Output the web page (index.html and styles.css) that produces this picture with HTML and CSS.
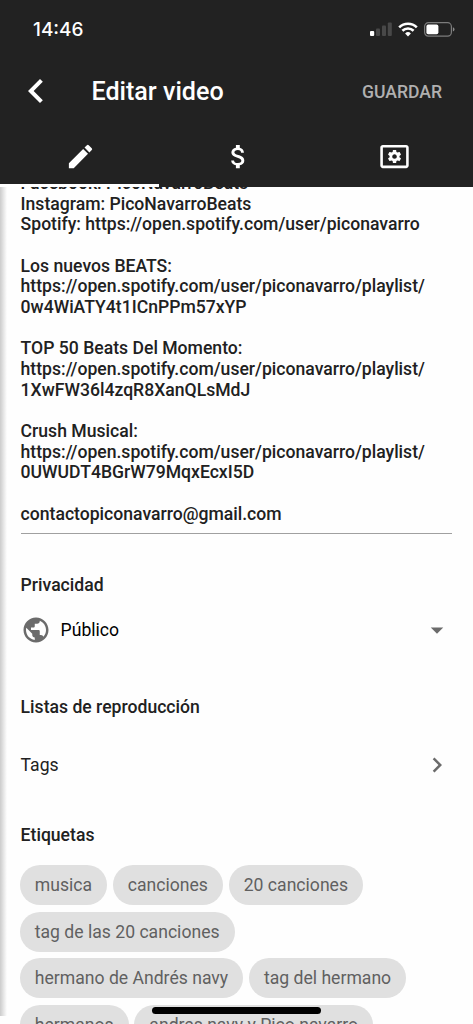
FILE: index.html
```html
<!DOCTYPE html>
<html lang="es">
<head>
    <meta charset="UTF-8">
    <meta name="viewport" content="width=device-width, initial-scale=1.0">
    <title>Editar video</title>
    <link rel="stylesheet" href="styles.css">
</head>
<body>
    <header>
        <div class="status">
            <span class="hora">14:46</span>
            <div class="status-icons">
                <svg class="signal" width="22" height="15" viewBox="0 0 22 15">
                    <rect x="0" y="9" width="4.2" height="5" rx="1" fill="#fff"/>
                    <rect x="6" y="6.5" width="4" height="7.5" rx="1" fill="#484848"/>
                    <rect x="12" y="3.5" width="4" height="10.5" rx="1" fill="#484848"/>
                    <rect x="17.8" y="0.5" width="4" height="13.5" rx="1" fill="#484848"/>
                </svg>
                <svg class="wifi" width="20" height="15" viewBox="0 0 20 15" fill="none" stroke="#fff" stroke-width="2.6">
                    <path d="M1.2 5.4a12.6 12.6 0 0 1 17.6 0"/>
                    <path d="M4.4 8.8a8 8 0 0 1 11.2 0"/>
                    <path d="M10 14.4l-2.9-2.9a4.2 4.2 0 0 1 5.8 0z" fill="#fff" stroke="none"/>
                </svg>
                <svg class="battery" width="31" height="15" viewBox="0 0 31 15">
                    <rect x="0.6" y="0.7" width="26.8" height="13.4" rx="3.8" fill="none" stroke="#7c7c7c" stroke-width="1.2"/>
                    <rect x="2.4" y="2.6" width="12" height="9.6" rx="1.8" fill="#fff"/>
                    <path d="M28.9 5.2q1.6.6 1.6 2.2t-1.6 2.2z" fill="#8a8a8a"/>
                </svg>
            </div>
        </div>
        <div class="barra">
            <svg class="volver" viewBox="0 0 24 24"><path d="M15.41 7.41L14 6l-6 6 6 6 1.41-1.41L10.83 12z"/></svg>
            <h1>Editar video</h1>
            <button class="guardar">GUARDAR</button>
        </div>
        <nav>
            <div class="tab activo">
                <svg viewBox="0 0 24 24"><path d="M3 17.25V21h3.75L17.81 9.94l-3.75-3.75L3 17.25zM20.71 7.04a1 1 0 0 0 0-1.41l-2.34-2.34a1 1 0 0 0-1.41 0l-1.83 1.83 3.75 3.75 1.83-1.83z"/></svg>
            </div>
            <div class="tab">
                <svg viewBox="0 0 24 24"><path d="M11.8 10.9c-2.27-.59-3-1.2-3-2.15 0-1.09 1.01-1.85 2.7-1.85 1.78 0 2.44.85 2.5 2.1h2.21c-.07-1.72-1.12-3.3-3.21-3.81V3h-3v2.16c-1.94.42-3.5 1.68-3.5 3.61 0 2.31 1.91 3.46 4.7 4.13 2.5.6 3 1.48 3 2.41 0 .69-.49 1.79-2.7 1.79-2.06 0-2.87-.92-2.98-2.1h-2.2c.12 2.19 1.76 3.42 3.68 3.83V21h3v-2.15c1.95-.37 3.5-1.5 3.5-3.55 0-2.84-2.43-3.81-4.7-4.4z"/></svg>
            </div>
            <div class="tab config">
                <svg viewBox="0 0 24 24">
                    <path d="M21 3H3c-1.1 0-2 .9-2 2v14c0 1.1.9 2 2 2h18c1.1 0 2-.9 2-2V5c0-1.1-.9-2-2-2zm0 16H3V5h18v14z"/>
                    <g transform="translate(5.9 5.9) scale(.51)">
                        <path d="M19.43 12.98c.04-.32.07-.64.07-.98s-.03-.66-.07-.98l2.11-1.65c.19-.15.24-.42.12-.64l-2-3.46c-.12-.22-.39-.3-.61-.22l-2.49 1c-.52-.4-1.08-.73-1.69-.98l-.38-2.65C14.46 2.18 14.25 2 14 2h-4c-.25 0-.46.18-.49.42l-.38 2.65c-.61.25-1.17.59-1.69.98l-2.49-1c-.23-.09-.49 0-.61.22l-2 3.46c-.13.22-.07.49.12.64l2.11 1.65c-.04.32-.07.65-.07.98s.03.66.07.98l-2.11 1.65c-.19.15-.24.42-.12.64l2 3.46c.12.22.39.3.61.22l2.49-1c.52.4 1.08.73 1.69.98l.38 2.65c.03.24.24.42.49.42h4c.25 0 .46-.18.49-.42l.38-2.65c.61-.25 1.17-.59 1.69-.98l2.49 1c.23.09.49 0 .61-.22l2-3.46c.12-.22.07-.49-.12-.64l-2.11-1.65zM12 15.5c-1.93 0-3.5-1.57-3.5-3.5s1.57-3.5 3.5-3.5 3.5 1.57 3.5 3.5-1.57 3.5-3.5 3.5z"/>
                    </g>
                </svg>
            </div>
        </nav>
    </header>

    <main>
        <div class="descripcion">Facebook: PicoNavarroBeats
Instagram: PicoNavarroBeats
Spotify: https://open.spotify.com/user/piconavarro

Los nuevos BEATS:
https://open.spotify.com/user/piconavarro/playlist/
0w4WiATY4t1ICnPPm57xYP

TOP 50 Beats Del Momento:
https://open.spotify.com/user/piconavarro/playlist/
1XwFW36l4zqR8XanQLsMdJ

Crush Musical:
https://open.spotify.com/user/piconavarro/playlist/
0UWUDT4BGrW79MqxEcxI5D

contactopiconavarro@gmail.com</div>

        <h2 class="privacidad">Privacidad</h2>
        <div class="fila publico">
            <svg class="mundo" viewBox="0 0 24 24"><path d="M12 2C6.48 2 2 6.48 2 12s4.48 10 10 10 10-4.48 10-10S17.52 2 12 2zm-1 17.93c-3.95-.49-7-3.85-7-7.93 0-.62.08-1.21.21-1.79L9 15v1c0 1.1.9 2 2 2v1.93zm6.9-2.54c-.26-.81-1-1.39-1.9-1.39h-1v-3c0-.55-.45-1-1-1H8v-2h2c.55 0 1-.45 1-1V7h2c1.1 0 2-.9 2-2v-.41c2.93 1.19 5 4.06 5 7.41 0 2.08-.8 3.97-2.1 5.39z"/></svg>
            <span>Público</span>
            <svg class="flecha" viewBox="0 0 24 24"><path d="M7 10l5 5 5-5z"/></svg>
        </div>

        <h2 class="listas">Listas de reproducción</h2>
        <div class="fila tags">
            <span>Tags</span>
            <svg class="flecha" viewBox="0 0 24 24"><path d="M10 6L8.59 7.41 13.17 12l-4.58 4.59L10 18l6-6z"/></svg>
        </div>

        <h2 class="etiquetas">Etiquetas</h2>
        <div class="chips">
            <span class="chip">musica</span>
            <span class="chip">canciones</span>
            <span class="chip">20 canciones</span>
            <span class="chip">tag de las 20 canciones</span>
            <span class="chip">hermano de Andrés navy</span>
            <span class="chip">tag del hermano</span>
            <span class="chip">hermanos</span>
            <span class="chip">andres navy y Pico navarro</span>
        </div>
    </main>

    <div class="sombra"></div>
    <div class="home"></div>
</body>
</html>
```
FILE: styles.css
```css
*{
    margin: 0;
    padding: 0;
    box-sizing: border-box;
}
body{
    position: relative;
    display: flex;
    flex-direction: column;
    height: 1024px;
    overflow: hidden;
    font-family: Roboto, sans-serif;
    color: #212121;
    background-color: #fefefe;
}
svg{
    display: block;
    flex-shrink: 0;
}
header{
    display: flex;
    flex-direction: column;
    flex-shrink: 0;
    height: 187px;
    color: white;
    background-color: #222222;
}
header svg{
    fill: white;
}
.status{
    display: flex;
    justify-content: space-between;
    align-items: center;
    height: 59px;
    padding: 0 18px 0 33px;
}
.hora{
    margin-top: -1px;
    font-family: Inter, sans-serif;
    font-size: 19px;
    font-weight: 500;
}
.status-icons{
    display: flex;
    align-items: center;
}
.wifi{
    margin: 0 6px;
}
.signal, .wifi, .battery{
    fill: none;
}
.barra{
    display: flex;
    align-items: center;
    height: 64px;
    padding: 0 31px 0 12px;
}
.volver{
    width: 48px;
    height: 48px;
}
h1{
    margin-left: 31.5px;
    font-size: 25.1px;
    font-weight: 500;
}
.guardar{
    margin: 2px 0 0 auto;
    border: none;
    background: none;
    font-family: inherit;
    font-size: 17.6px;
    font-weight: 500;
    color: #b0b0b0;
}
nav{
    display: flex;
    flex: 1;
}
.tab{
    display: flex;
    flex: 1;
    justify-content: center;
    padding: 18px 0 0 1px;
}
.tab svg{
    width: 31px;
    height: 31px;
}
.activo{
    padding-left: 2px;
    border-bottom: 3px solid white;
}
.config{
    padding-left: 0;
}
main{
    flex: 1;
    overflow: hidden;
    padding: 0 20.6px;
}
.descripcion{
    margin-top: -14px;
    height: 361px;
    border-bottom: 1px solid #a0a0a0;
    font-size: 17.6px;
    font-weight: 500;
    line-height: 20.67px;
    white-space: pre;
}
h2{
    font-size: 17.6px;
    font-weight: 500;
    line-height: 20px;
}
.privacidad{
    margin-top: 41px;
}
.fila{
    display: flex;
    align-items: center;
    height: 30px;
    font-size: 17.6px;
}
.fila svg{
    width: 30px;
    height: 30px;
    fill: #6b6b6b;
}
.fila .flecha{
    margin-left: auto;
}
.publico{
    margin-top: 20px;
    color: black;
}
.mundo{
    margin-right: 10px;
}
.listas{
    margin-top: 52px;
}
.tags{
    margin-top: 33px;
}
.etiquetas{
    margin-top: 45px;
}
.chips{
    display: flex;
    flex-wrap: wrap;
    gap: 6.7px 5.4px;
    margin: 20px 0 0 -1px;
}
.chip{
    height: 40px;
    padding: 0 15.2px;
    border-radius: 20px;
    font-size: 17.6px;
    line-height: 40px;
    color: #606060;
    background-color: #e0e0e0;
}
.sombra{
    position: absolute;
    left: 0;
    top: 187px;
    bottom: 8px;
    width: 7px;
    background: linear-gradient(to right, rgba(0, 0, 0, 0.2), rgba(0, 0, 0, 0));
}
.home{
    position: absolute;
    left: 152px;
    bottom: 10px;
    width: 169px;
    height: 7px;
    border-radius: 4px;
    background-color: black;
}
```
